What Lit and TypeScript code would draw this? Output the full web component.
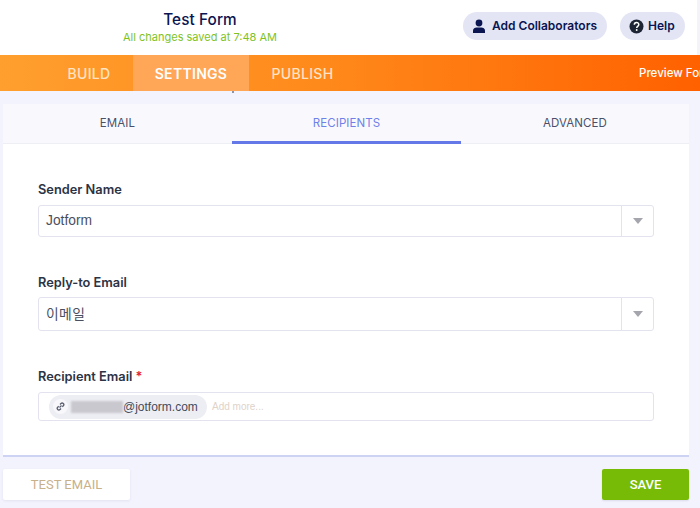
import { LitElement, html, css } from "lit";
import { customElement } from "lit/decorators.js";

@customElement("app-root")
export class AppRoot extends LitElement {
  static styles = css`
    :host { display: block; width: 700px; height: 508px; overflow: hidden; background: #f3f3fe; font-family: "Inter", sans-serif; position: relative; }
    * { box-sizing: border-box; }
    .top { height: 55px; background: #fff; display: flex; align-items: flex-start; padding-right: 12px; border-right: 3px solid #f3f3f8; }
    .title { width: 400px; text-align: center; display: flex; flex-direction: column; align-items: center; padding-top: 10px; }
    .title b { font-size: 15.300px; line-height: 19px; font-weight: 500; color: #0a1551; letter-spacing: .1px; }
    .title span { font-size: 11px; line-height: 15px; margin-top: 1px; color: #7fc31f; }
    .actions { margin-left: auto; display: flex; gap: 13px; padding-top: 12px; }
    .pill { height: 28px; border-radius: 14px; background: #e3e5f5; color: #0a1551; font-size: 12px; font-weight: 600; display: flex; align-items: center; gap: 6px; padding-bottom: 1px; }
    .pill svg { margin-top: 1px; }
    .pill.c { width: 144px; padding-left: 9px; }
    .pill.h { width: 65px; padding-left: 9px; gap: 4px; }
    .nav { height: 36px; background: linear-gradient(90deg, #ff9f2e 0%, #ff8a1c 45%, #ff6100 100%); display: flex; padding-left: 45px; color: #ffe3c4; font-size: 14px; font-weight: 500; white-space: nowrap; overflow: hidden; }
    .nav div { display: flex; align-items: center; justify-content: center; letter-spacing: .3px; }
    .nav .build { width: 88px; }
    .nav .set { width: 116px; background: #ffa757; color: #fff; font-weight: 600; }
    .nav .pub { width: 107px; }
    .nav .prev { margin-left: auto; width: 61px; justify-content: flex-start; color: #fff; font-size: 11.5px; letter-spacing: 0; overflow: hidden; }
    .speck { position: absolute; left: 232px; top: 91px; width: 2px; height: 2px; background: #8f93a6; }
    .main { margin: 13px 11px 0 3px; }
    .card { background: #fff; height: 353px; border-bottom: 2px solid #cdd4f3; }
    .tabs { display: grid; grid-template-columns: 229px 229px 228px; height: 40px; background: #f9f9fd; border-bottom: 1px solid #eeeef5; }
    .tab { display: flex; align-items: center; justify-content: center; padding-bottom: 2px; font-size: 11.5px; color: #4a4f6a; letter-spacing: .1px; }
    .tab.on { color: #6f81e8; border-bottom: 3px solid #6478e8; padding-bottom: 0; margin-bottom: -1px; }
    .form { padding: 38px 35px 0; display: flex; flex-direction: column; }
    label { font-size: 12.8px; line-height: 16px; font-weight: 600; color: #2c3345; display: block; margin-bottom: 7px; }
    label i { color: #e0243c; font-style: normal; }
    .f1 { margin-bottom: 38px; }
    .f1 label { margin-bottom: 7px; }
    .f2 { margin-bottom: 38px; }
    .f2 label { margin-bottom: 6px; }
    .box { width: 616px; border: 1px solid #e3e3f0; border-radius: 3px; background: #fff; display: flex; align-items: stretch; font-family: "Liberation Sans", sans-serif; font-size: 14px; color: #4a4f60; }
    .sel { height: 32px; }
    .sel2 { height: 34px; }
    .val { flex: 1; display: flex; align-items: center; padding-left: 7px; padding-bottom: 1px; font-size: 13.8px; font-family: "Liberation Sans", "Noto Sans CJK KR", sans-serif; }
    .sel2 .val { padding-bottom: 2px; letter-spacing: .4px; }
    .arrow { width: 32px; border-left: 1px solid #e3e3f0; display: flex; align-items: center; justify-content: center; }
    .arrow::after { content: ""; width: 0; height: 0; border-left: 5px solid transparent; border-right: 5px solid transparent; border-top: 6px solid #a5a5ad; }
    .tags { height: 29px; align-items: center; padding-left: 10px; gap: 5px; }
    .chip { height: 24px; width: 158px; border-radius: 12px; background: #edeef4; display: flex; align-items: center; padding-left: 4px; font-size: 12px; color: #454a5a; }
    .ico { width: 15px; height: 15px; border-radius: 50%; background: #f8f8fb; display: flex; align-items: center; justify-content: center; margin-right: 3px; }
    .blur { width: 52px; height: 12px; background: #c8c8ce; filter: blur(1px); }
    .more { font-size: 10px; color: #e0d3c9; }
    .foot { display: flex; justify-content: space-between; margin-top: 12px; }
    .btn { height: 31px; border-radius: 2px; display: flex; align-items: center; justify-content: center; font-family: "Roboto", sans-serif; font-size: 13px; }
    .test { width: 127px; background: #fff; color: #c8b089; box-shadow: 0 1px 3px rgba(40,40,80,.08); }
    .save { width: 87px; background: #78bb07; color: #fff; font-weight: 500; box-shadow: 0 1px 2px rgba(40,40,80,.12); }
  `;

  render() {
    return html`
      <div class="top">
        <div class="title"><b>Test Form</b><span>All changes saved at 7:48 AM</span></div>
        <div class="actions">
          <div class="pill c">
            <svg width="14" height="15" viewBox="0 0 14 15"><circle cx="7" cy="4" r="3.4" fill="#0a1551"/><path d="M1 14v-2.500C1 9.500 3 8.500 4.500 8.500h5c1.500 0 3.500 1 3.500 3V14z" fill="#0a1551"/></svg>
            Add Collaborators
          </div>
          <div class="pill h">
            <svg width="15" height="15" viewBox="0 0 15 15"><circle cx="7.500" cy="7.500" r="7" fill="#1d2433"/><path d="M5.300 5.800c0-3 4.500-3 4.500-.2 0 1.700-2.100 1.700-2.100 3.300" fill="none" stroke="#fff" stroke-width="1.500"/><circle cx="7.700" cy="11" r=".95" fill="#fff"/></svg>
            Help
          </div>
        </div>
      </div>
      <div class="nav">
        <div class="build">BUILD</div>
        <div class="set">SETTINGS</div>
        <div class="pub">PUBLISH</div>
        <div class="prev">Preview Form</div>
      </div>
      <div class="speck"></div>
      <div class="main">
        <div class="card">
          <div class="tabs">
            <div class="tab">EMAIL</div>
            <div class="tab on">RECIPIENTS</div>
            <div class="tab">ADVANCED</div>
          </div>
          <div class="form">
            <div class="f1">
              <label>Sender Name</label>
              <div class="box sel"><div class="val">Jotform</div><div class="arrow"></div></div>
            </div>
            <div class="f2">
              <label>Reply-to Email</label>
              <div class="box sel2"><div class="val">이메일</div><div class="arrow"></div></div>
            </div>
            <div>
              <label>Recipient Email <i>*</i></label>
              <div class="box tags">
                <div class="chip">
                  <span class="ico"><svg width="9" height="9" viewBox="0 0 9 9" fill="none" stroke="#5a5f70" stroke-width="1.300"><path d="M4 2.500l1-1a1.500 1.500 0 0 1 2.300 2.300l-1 1"/><path d="M5 6.500l-1 1a1.500 1.500 0 0 1-2.300-2.300l1-1"/><path d="M3.500 5.500l2-2"/></svg></span>
                  <span class="blur"></span>@jotform.com
                </div>
                <span class="more">Add more...</span>
              </div>
            </div>
          </div>
        </div>
        <div class="foot">
          <div class="btn test">TEST EMAIL</div>
          <div class="btn save">SAVE</div>
        </div>
      </div>
    `;
  }
}
